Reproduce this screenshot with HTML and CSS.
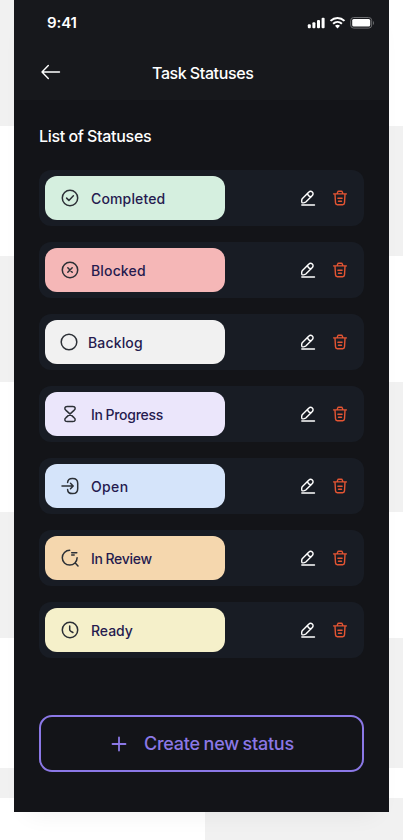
FILE: index.html
```html
<!DOCTYPE html>
<html lang="en">
<head>
<meta charset="utf-8">
<title>Task Statuses</title>
<link rel="stylesheet" href="styles.css">
</head>
<body>
<svg class="defs" width="0" height="0">
  <symbol id="edit" viewBox="0 0 16 16"><path d="M2.200 8.800 8.700 2.200C9.900 1 11.200 1 12.300 2.100S13.300 4.500 12.100 5.700L5.800 12.100C4.900 12.900 2.400 13.100 2 12.700S1.500 9.700 2.200 8.800Z"/><path d="M7.500 3.500C7.800 5.300 9.100 6.500 10.900 6.700M1.800 15H14.500"/></symbol>
  <symbol id="trash" viewBox="0 0 16 16"><path d="M1.600 3.900H14.400M5.200 3.700 5.700 1.900C5.800 1.400 6.100 1.200 6.600 1.200H9.400C9.900 1.200 10.200 1.400 10.300 1.900L10.800 3.700M3 4.200 3.500 12.900C3.600 14.200 4.200 14.700 5.300 14.700H10.700C11.800 14.700 12.400 14.200 12.500 12.900L13 4.200M5.900 8.200H10.100M6.500 11.200H9.500"/></symbol>
</svg>
<main class="phone">
  <header class="header">
    <div class="statusbar">
      <span class="time">9:41</span>
      <svg class="signals" width="68" height="14" viewBox="0 0 68 14">
        <g fill="#fff"><rect x=".8" y="8.300" width="3" height="4" rx="1"/><rect x="5.400" y="6.300" width="3" height="6" rx="1"/><rect x="10" y="4" width="3" height="8.300" rx="1"/><rect x="14.600" y="1.700" width="3" height="10.600" rx="1"/></g>
        <g fill="none" stroke="#fff" stroke-width="2"><path d="M23.500 4.900C27.700 .9 33.300 .9 37.500 4.900M26.100 7.700C28.700 5.300 32.300 5.300 34.900 7.700"/></g>
        <path fill="#fff" d="M28 9.800C29.400 8.500 31.600 8.500 33 9.800L30.500 12.400Z"/>
        <rect x="43.700" y="1.500" width="21" height="10.600" rx="3" fill="none" stroke="#6d6e71"/>
        <rect x="45.200" y="3" width="18" height="7.600" rx="1.500" fill="#fff"/>
        <path d="M66 5v4C67.300 8.400 67.300 5.600 66 5Z" fill="#6d6e71"/>
      </svg>
    </div>
    <div class="nav">
      <svg class="back" width="20" height="16" viewBox="0 0 20 16"><path d="M7.300 1.600 1 8 7.300 14.400M1 8H18.500"/></svg>
      <h1 class="title">Task Statuses</h1>
    </div>
  </header>
  <section class="content">
    <h2 class="heading">List of Statuses</h2>
    <ul class="list">
      <li class="row"><div class="status completed"><svg class="icon" viewBox="0 0 18 18"><circle cx="9" cy="9" r="7.700"/><path d="m5.600 9.100 2.300 2.300 4.500-4.600"/></svg><span class="label">Completed</span></div><svg class="edit"><use href="#edit"/></svg><svg class="trash"><use href="#trash"/></svg></li>
      <li class="row"><div class="status blocked"><svg class="icon" viewBox="0 0 18 18"><circle cx="9" cy="9" r="7.700"/><path d="m6.800 6.800 4.400 4.400m0-4.400-4.400 4.400"/></svg><span class="label">Blocked</span></div><svg class="edit"><use href="#edit"/></svg><svg class="trash"><use href="#trash"/></svg></li>
      <li class="row"><div class="status backlog"><svg class="icon" viewBox="0 0 18 18"><circle cx="9" cy="9" r="7.800"/></svg><span class="label">Backlog</span></div><svg class="edit"><use href="#edit"/></svg><svg class="trash"><use href="#trash"/></svg></li>
      <li class="row"><div class="status progress"><svg class="icon" viewBox="0 0 18 18"><path d="M6.100 1.400H11.900C14.600 1.400 14.800 4.100 13 5.400L5 12.600C3.200 13.900 3.400 16.600 6.100 16.600H11.900C14.600 16.600 14.800 13.900 13 12.600L5 5.400C3.200 4.100 3.400 1.400 6.100 1.400Z"/></svg><span class="label">In Progress</span></div><svg class="edit"><use href="#edit"/></svg><svg class="trash"><use href="#trash"/></svg></li>
      <li class="row"><div class="status open"><svg class="icon" viewBox="0 0 18 18"><path d="M6.600 5.500C6.800 2.500 8.200 1.400 11.300 1.400H11.700C15.300 1.400 16.700 2.700 16.700 6.300V11.700C16.700 15.300 15.300 16.600 11.700 16.600H11.300C8.200 16.600 6.800 15.500 6.600 12.600M1 9H11.800M9.500 6.300 12.200 9 9.500 11.700"/></svg><span class="label">Open</span></div><svg class="edit"><use href="#edit"/></svg><svg class="trash"><use href="#trash"/></svg></li>
      <li class="row"><div class="status review"><svg class="icon" viewBox="0 0 18 18"><path d="M16.100 8.700A7.400 7.400 0 1 1 8.700 1.300M10.700 3.800H15.800M10.700 6H13.200M14.500 14.300 17 16.900"/></svg><span class="label">In Review</span></div><svg class="edit"><use href="#edit"/></svg><svg class="trash"><use href="#trash"/></svg></li>
      <li class="row"><div class="status ready"><svg class="icon" viewBox="0 0 18 18"><circle cx="9" cy="9" r="7.700"/><path d="M8.700 5V8.500C8.700 9.200 9 9.700 9.600 10.100L11.900 11.500"/></svg><span class="label">Ready</span></div><svg class="edit"><use href="#edit"/></svg><svg class="trash"><use href="#trash"/></svg></li>
    </ul>
    <button class="create"><svg class="plus" width="16" height="16" viewBox="0 0 16 16"><path d="M8 1.500v13M1.500 8h13"/></svg><span class="create-label">Create new status</span></button>
  </section>
</main>
</body>
</html>
```
FILE: styles.css
```css
* { box-sizing: border-box; }
body {
  margin: 0;
  width: 403px;
  height: 840px;
  overflow: hidden;
  padding-left: 14px;
  font-family: Inter, "Liberation Sans", sans-serif;
  background:
    linear-gradient(#f1f1f1, #f1f1f1) 205px 798px / 198px 42px no-repeat,
    linear-gradient(#f1f1f1 126px, #fff 126px 256px, #f1f1f1 256px 382px, #fff 382px 512px, #f1f1f1 512px 638px, #fff 638px 768px, #f1f1f1 768px 798px, #fff 798px) 0 0 / 205px 840px no-repeat,
    linear-gradient(#fff 126px, #f1f1f1 126px 256px, #fff 256px 382px, #f1f1f1 382px 512px, #fff 512px 638px, #f1f1f1 638px 768px, #fff 768px) 205px 0 / 198px 840px no-repeat;
}
.defs { display: block; }
.phone {
  width: 375px;
  height: 812px;
  background: #131418;
  color: #fff;
  box-shadow: 0 14px 24px -14px rgb(0 0 0 / 7%);
}
.header { height: 100px; background: #17181c; }
.statusbar {
  height: 46px;
  padding: 0 14px 1px 33px;
  display: flex;
  align-items: center;
  justify-content: space-between;
}
.time { font-size: 15px; font-weight: 600; letter-spacing: -.1px; }
.nav { height: 54px; padding-left: 27px; display: flex; align-items: center; }
.back { margin-top: -2px; fill: none; stroke: #fff; stroke-width: 1.4; stroke-linecap: round; stroke-linejoin: round; }
.title { margin: 0 0 0 91px; font-size: 16px; font-weight: 500; letter-spacing: -.38px; word-spacing: -.5px; }
.content { padding: 26px 25px 0; }
.heading { margin: 0 0 24px; font-size: 16px; line-height: 20px; font-weight: 500; letter-spacing: -.28px; word-spacing: -.6px; }
.list { list-style: none; margin: 0; padding: 0; display: grid; gap: 16px; }
.row { width: 325px; height: 56px; padding: 6px 16px 6px 6px; display: flex; align-items: center; border-radius: 12px; background: #181c24; }
.status { width: 180px; height: 44px; padding-left: 16px; display: flex; align-items: center; gap: 12px; border-radius: 12px; margin-right: 75px; }
.completed { background: #d5efdf; }
.blocked { background: #f5b7b7; }
.backlog { background: #f1f1f1; padding-left: 14.500px; gap: 10.500px; }
.progress { background: #ebe6fb; }
.open { background: #d5e4fa; }
.review { background: #f5d7ae; }
.ready { background: #f5f0ca; }
.icon { width: 18px; height: 18px; fill: none; stroke: #2c3036; stroke-width: 1.5; stroke-linecap: round; stroke-linejoin: round; }
.label { margin-top: 2px; color: #261b4f; font-size: 14px; font-weight: 500; line-height: 20px; letter-spacing: .15px; white-space: nowrap; }
.progress .label, .review .label { letter-spacing: -.25px; word-spacing: -.8px; }
.open .label { letter-spacing: .35px; }
.ready .label { letter-spacing: -.05px; }
.edit, .trash { width: 16px; height: 16px; fill: none; stroke-width: 1.4; stroke-linecap: round; stroke-linejoin: round; }
.edit { stroke: #fff; margin-right: 16px; }
.trash { stroke: #e45533; }
.create {
  width: 325px;
  height: 57px;
  margin: 57px 0 0;
  padding: 0 0 0 70px;
  display: flex;
  align-items: center;
  gap: 17px;
  border: 2px solid #8b78e6;
  border-radius: 13px;
  background: transparent;
  color: #8b78e6;
  font: 500 18px/24px Inter, "Liberation Sans", sans-serif;
}
.plus { stroke: currentColor; stroke-width: 1.800; stroke-linecap: round; }
.create-label { letter-spacing: -.25px; word-spacing: -.8px; white-space: nowrap; }
```
